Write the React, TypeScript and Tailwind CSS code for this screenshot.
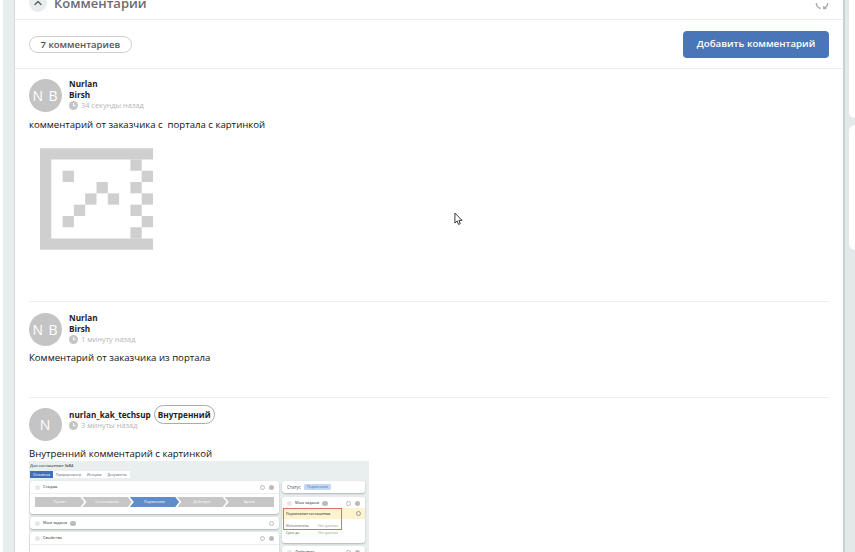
import type { ReactNode } from 'react';
import { ChevronUp } from 'lucide-react';

function ClockIcon() {
  return (
    <svg viewBox="0 0 10 10" className="h-[9px] w-[9px] shrink-0">
      <circle cx="5" cy="5" r="5" fill="#c4c4c4" />
      <path d="M5 2.2V5.3H7.4" stroke="#fff" strokeWidth="1.1" fill="none" />
    </svg>
  );
}

function BrokenImage() {
  const cells = [
    [8, 1], [9, 2], [8, 3], [9, 4], [8, 5], [9, 6], [8, 7],
    [2, 2], [5, 3], [4, 4], [6, 4], [3, 5], [2, 6],
  ];
  return (
    <svg viewBox="0 0 10 9" className="h-[102px] w-[113px]">
      <path d="M0 0H10V1H1V8H10V9H0Z" fill="#cfcfcf" />
      {cells.map(([x, y]) => (
        <rect key={`${x}-${y}`} x={x} y={y} width="1" height="1" fill="#cfcfcf" />
      ))}
    </svg>
  );
}

function Avatar({ initials }: { initials: string }) {
  return (
    <div className="flex h-[33px] w-[33px] shrink-0 items-center justify-center rounded-full bg-[#c4c4c4] text-[14px] tracking-[1px] text-white">
      {initials}
    </div>
  );
}

function MiniCard({ title, badge, single, children }: { title: string; badge?: boolean; single?: boolean; children?: ReactNode }) {
  return (
    <div className="mb-[3px] rounded-[3px] bg-white shadow-[0_1px_2px_rgba(0,0,0,0.25)]">
      <div className="flex h-[12px] items-center gap-[3px] px-[5px] text-[4px] font-semibold text-[#666]">
        <span className="h-[5px] w-[5px] rounded-full bg-[#e4e8e8]" />
        <span>{title}</span>
        {badge && <span className="h-[5px] w-[6px] rounded-full bg-[#bbb]" />}
        <span className="ml-auto h-[5px] w-[5px] rounded-full border border-[#bbb]" />
        {!single && <span className="ml-[1px] h-[5px] w-[5px] rounded-full bg-[#bbb]" />}
      </div>
      {children}
    </div>
  );
}

function Stage({ label, active, first, last }: { label: string; active?: boolean; first?: boolean; last?: boolean }) {
  return (
    <div
      className={`flex h-[10px] w-[50px] items-center justify-center text-[3.5px] text-white ${active ? 'bg-[#5f8ccb]' : 'bg-[#c6c6c6]'} ${first ? '[clip-path:polygon(0_0,calc(100%-4px)_0,100%_50%,calc(100%-4px)_100%,0_100%)]' : '-ml-[2px]'} ${last ? '[clip-path:polygon(0_0,100%_0,100%_100%,0_100%,4px_50%)]' : ''} ${!first && !last ? '[clip-path:polygon(0_0,calc(100%-4px)_0,100%_50%,calc(100%-4px)_100%,0_100%,4px_50%)]' : ''}`}
    >
      {label}
    </div>
  );
}

function TaskRow({ label }: { label: string }) {
  return (
    <div className="flex h-[7px] items-center pl-[4px] text-[3.5px]">
      <span className="w-[32px]">{label}</span>
      <span className="text-[#999]">Нет данных</span>
    </div>
  );
}

function Screenshot() {
  return (
    <div className="h-[120px] w-[340px] bg-[#e9eeee] pt-[1px] pl-[1px] text-[4px] text-[#555]">
      <div className="h-[7px] leading-[7px] font-semibold">Доп.соглашение №84</div>
      <div className="mt-[2px] mb-[3px] flex h-[7px] items-center text-[3.5px]">
        <span className="bg-[#3f6fb5] px-[3px] leading-[7px] text-white">Основная</span>
        <span className="bg-white px-[3px] leading-[7px]">Предпросмотр</span>
        <span className="bg-white px-[3px] leading-[7px]">История</span>
        <span className="bg-white px-[3px] leading-[7px]">Документы</span>
      </div>
      <div className="flex gap-[3px]">
        <div className="w-[249px]">
          <MiniCard title="Стадия">
            <div className="flex border-t border-[#eee] px-[5px] pt-[3px] pb-[7px]">
              <Stage label="Проект" first />
              <Stage label="Согласование" />
              <Stage label="Подписание" active />
              <Stage label="Действует" />
              <Stage label="Архив" last />
            </div>
          </MiniCard>
          <MiniCard title="Мои задачи" badge single />
          <MiniCard title="Свойства">
            <div className="h-[20px] border-t border-[#eee]" />
          </MiniCard>
        </div>
        <div className="w-[83px]">
          <div className="mb-[4px] flex h-[12px] items-center gap-[3px] rounded-[3px] bg-white px-[5px] text-[4.5px] shadow-[0_1px_2px_rgba(0,0,0,0.25)]">
            <span>Статус</span>
            <span className="rounded-[1px] bg-[#c5d8f2] px-[3px] text-[3.5px] text-[#3f6fb5]">Подписание</span>
          </div>
          <MiniCard title="Мои задачи" badge>
            <div className="relative -mt-[1px] h-[35px]">
              <div className="flex h-[11px] items-center justify-between bg-[#fdf3cf] px-[4px] text-[3.5px] font-semibold">
                Подписание соглашения
                <span className="h-[5px] w-[5px] rounded-full border border-[#999]" />
              </div>
              <div className="h-[3px]" />
              <TaskRow label="Исполнитель" />
              <TaskRow label="Срок до" />
              <div className="absolute top-0 left-[1px] h-[22px] w-[59px] border border-[#dc6f6a]" />
            </div>
          </MiniCard>
          <MiniCard title="Действия" />
        </div>
      </div>
    </div>
  );
}

function CommentHead({ name, surname, time, initials, internal }: { name: string; surname?: string; time: string; initials: string; internal?: boolean }) {
  return (
    <div className="flex gap-[7px]">
      <Avatar initials={initials} />
      <div className={`text-[8.2px] leading-[11px] font-bold text-[#222] ${internal ? 'pt-[1px]' : '-mt-[1px]'}`}>
        <div className="flex items-center gap-[3px]">
          {name}
          {internal && (
            <span className="-my-[5px] rounded-full border-[1.5px] border-[#aaa] px-[3px] py-[3px] leading-[11px]">Внутренний</span>
          )}
        </div>
        {surname && <div>{surname}</div>}
        <div className="flex items-center gap-[3px] text-[7.4px] font-normal text-[#b5b5b5]">
          <ClockIcon />
          {time}
        </div>
      </div>
    </div>
  );
}

export default function App() {
  return (
    <div className="relative flex h-[552px] w-[855px] overflow-hidden bg-white font-['Open_Sans',sans-serif] text-[#222]">
      <div className="ml-[3px] w-[11px] shrink-0 bg-[#e7eded]" />
      <main className="flex h-full w-[831px] shrink-0 flex-col border-r-2 border-l border-r-[#c9d0d0] border-l-[#d5dcdc] bg-white">
        <header className="flex h-[20px] shrink-0 items-end justify-between overflow-hidden border-b border-[#e9eded] px-[14px]">
          <div className="mb-[6px] flex items-center gap-[7px]">
            <span className="flex h-[18px] w-[18px] items-center justify-center rounded-full bg-[#e8eeee]">
              <ChevronUp className="h-[12px] w-[12px] text-[#666]" strokeWidth={3} />
            </span>
            <span className="text-[13px] font-semibold text-[#6b6b6b]">Комментарии</span>
          </div>
          <svg viewBox="0 0 16 16" className="mb-[9px] h-[14px] w-[14px]" fill="none" stroke="#a8a8a8" strokeWidth="1.5">
            <path d="M1.5 8a6.5 6.5 0 0 0 5 6.3M14.5 8a6.5 6.5 0 0 1-4 6M10 11.5v3h3" />
          </svg>
        </header>
        <div className="flex h-[49px] shrink-0 items-center justify-between border-b border-[#e9eded] px-[14px]">
          <span className="rounded-full border border-[#cfcfcf] px-[10.5px] text-[9.5px] leading-[15px] font-semibold text-[#555]">7 комментариев</span>
          <button className="h-[27px] w-[146px] rounded-[4px] bg-[#4a76b8] text-[9.7px] font-semibold text-white">Добавить комментарий</button>
        </div>
        <div className="flex-1 px-[14px]">
          <section className="h-[233px] border-b border-[#e9eded] pt-[10px]">
            <CommentHead name="Nurlan" surname="Birsh" time="34 секунды назад" initials="N B" />
            <p className="mt-[6px] text-[9.6px] leading-[14px] whitespace-pre text-[#111]">комментарий от заказчика с  портала с картинкой</p>
            <div className="mt-[16px] ml-[11px]">
              <BrokenImage />
            </div>
          </section>
          <section className="h-[96px] border-b border-[#e9eded] pt-[11px]">
            <CommentHead name="Nurlan" surname="Birsh" time="1 минуту назад" initials="N B" />
            <p className="mt-[5px] text-[9.6px] leading-[14px] text-[#111]">Комментарий от заказчика из портала</p>
          </section>
          <section className="pt-[10px]">
            <CommentHead name="nurlan_kak_techsup" time="3 минуты назад" initials="N" internal />
            <p className="mt-[6px] text-[9.6px] leading-[14px] text-[#111]">Внутренний комментарий с картинкой</p>
            <Screenshot />
          </section>
        </div>
      </main>
      <aside className="flex flex-1 flex-col gap-[7px] bg-[#e3e9e9] pl-[4px]">
        <div className="h-[118px] rounded-bl-[6px] bg-white" />
        <div className="h-[125px] rounded-l-[6px] bg-white" />
      </aside>
      <svg viewBox="0 0 10 15" className="absolute top-[212px] left-[454px] h-[14px] w-[9px]" fill="#fff" stroke="#222" strokeWidth="1">
        <path d="M1 1V12L3.5 9.7L5 13.5L7 12.7L5.5 9H9Z" />
      </svg>
    </div>
  );
}
